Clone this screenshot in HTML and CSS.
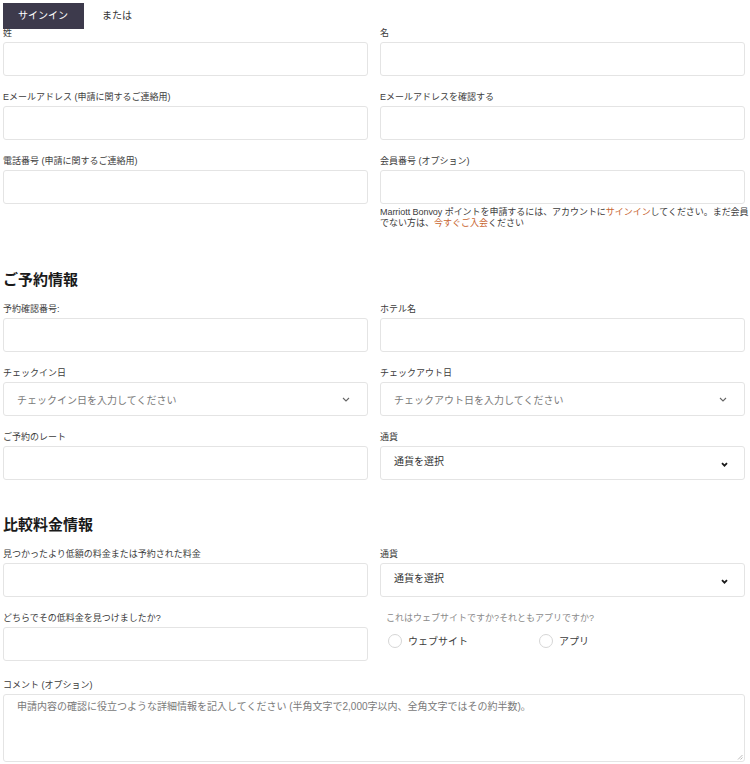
FILE: index.html
```html
<!DOCTYPE html>
<html lang="ja">
<head>
<meta charset="utf-8">
<link rel="stylesheet" href="styles.css">
</head>
<body>
<div class="page">
  <div class="tabs">
    <div class="tab active">サインイン</div>
    <div class="tab">または</div>
  </div>

  <div class="grid">
    <div class="field"><div class="label">姓</div><div class="input"></div></div>
    <div class="field"><div class="label">名</div><div class="input"></div></div>
    <div class="field"><div class="label">Eメールアドレス (申請に関するご連絡用)</div><div class="input"></div></div>
    <div class="field"><div class="label">Eメールアドレスを確認する</div><div class="input"></div></div>
    <div class="field"><div class="label">電話番号 (申請に関するご連絡用)</div><div class="input"></div></div>
    <div class="field"><div class="label">会員番号 (オプション)</div><div class="input"></div>
      <div class="help"><span class="line1">Marriott Bonvoy ポイントを申請するには、アカウントに<span class="link">サインイン</span>してください。まだ会員</span><br>でない方は、<span class="link">今すぐご入会</span>ください</div>
    </div>
  </div>

  <h2 class="heading first">ご予約情報</h2>
  <div class="grid">
    <div class="field"><div class="label">予約確認番号:</div><div class="input"></div></div>
    <div class="field"><div class="label">ホテル名</div><div class="input"></div></div>
    <div class="field"><div class="label">チェックイン日</div>
      <div class="input select"><span class="ph">チェックイン日を入力してください</span>
        <svg class="chev-thin" width="8" height="5" viewBox="0 0 8 5"><polyline points="1,1 4,4 7,1" fill="none" stroke="#666" stroke-width="1.1"/></svg>
      </div>
    </div>
    <div class="field"><div class="label">チェックアウト日</div>
      <div class="input select"><span class="ph">チェックアウト日を入力してください</span>
        <svg class="chev-thin" width="8" height="5" viewBox="0 0 8 5"><polyline points="1,1 4,4 7,1" fill="none" stroke="#666" stroke-width="1.1"/></svg>
      </div>
    </div>
    <div class="field"><div class="label">ご予約のレート</div><div class="input"></div></div>
    <div class="field"><div class="label">通貨</div>
      <div class="input select"><span class="val">通貨を選択</span>
        <svg class="chev-bold" width="7" height="5" viewBox="0 0 7 5"><polyline points="1,1.2 3.5,3.7 6,1.2" fill="none" stroke="#1a1a1a" stroke-width="1.8"/></svg>
      </div>
    </div>
  </div>

  <h2 class="heading second">比較料金情報</h2>
  <div class="grid">
    <div class="field"><div class="label">見つかったより低額の料金または予約された料金</div><div class="input"></div></div>
    <div class="field"><div class="label">通貨</div>
      <div class="input select"><span class="val">通貨を選択</span>
        <svg class="chev-bold" width="7" height="5" viewBox="0 0 7 5"><polyline points="1,1.2 3.5,3.7 6,1.2" fill="none" stroke="#1a1a1a" stroke-width="1.8"/></svg>
      </div>
    </div>
    <div class="field"><div class="label">どちらでその低料金を見つけましたか?</div><div class="input"></div></div>
    <div class="field">
      <div class="label q">これはウェブサイトですか?それともアプリですか?</div>
      <div class="radios">
        <div class="radio"><span class="circle"></span><span>ウェブサイト</span></div>
        <div class="radio"><span class="circle"></span><span>アプリ</span></div>
      </div>
    </div>
  </div>

  <div class="field comment">
    <div class="label">コメント (オプション)</div>
    <div class="input textarea"><span class="ph">申請内容の確認に役立つような詳細情報を記入してください (半角文字で2,000字以内、全角文字ではその約半数)。</span>
      <svg class="grip" width="6" height="6" viewBox="0 0 6 6"><line x1="1" y1="5.5" x2="5.5" y2="1" stroke="#aaa" stroke-width="0.8"/><line x1="3.5" y1="5.5" x2="5.5" y2="3.5" stroke="#aaa" stroke-width="0.8"/></svg>
    </div>
  </div>
</div>
</body>
</html>
```

FILE: styles.css
```css
* { box-sizing: border-box; }
html, body { margin: 0; padding: 0; background: #fff; }
body {
  font-family: "Liberation Sans", "Noto Sans CJK JP", sans-serif;
  color: #3c3c3c;
}
.page {
  padding: 3px 5px 0 3px;
  width: 750px;
}
.tabs {
  display: flex;
  align-items: center;
  height: 26px;
  margin-bottom: -2px;
}
.tab {
  font-size: 10px;
  line-height: 26px;
  color: #333;
  padding: 0 0 0 18px;
}
.tab.active {
  background: #3d3a4c;
  color: #fff;
  width: 81px;
  padding: 0 0 0 15px;
}
.grid {
  display: grid;
  grid-template-columns: 365px 365px;
  column-gap: 12px;
  row-gap: 15px;
}
.field { display: flex; flex-direction: column; }
.label {
  font-size: 9px;
  line-height: 12px;
  height: 12px;
  margin-bottom: 3px;
  color: #3c3c3c;
  white-space: nowrap;
}
.label.q { color: #8a8a8a; padding-left: 6px; margin-bottom: 9px; }
.input {
  height: 34px;
  border: 1px solid #e4e4e4;
  border-radius: 3px;
  background: #fff;
  position: relative;
}
.select {
  display: flex;
  align-items: center;
  justify-content: space-between;
  padding: 0 15px 0 13px;
  font-size: 10px;
}
.ph { font-size: 10px; color: #7a7a7a; }
.val { font-size: 10px; color: #333; margin-top: -5px; }
.chev-thin { margin-right: 2px; margin-top: 1px; }
.chev-bold { margin-top: 2px; margin-right: 1px; }
.help {
  font-size: 9px;
  line-height: 10.5px;
  margin-top: 3px;
  color: #3c3c3c;
}
.line1 { white-space: nowrap; letter-spacing: -0.05px; }
.link { color: #c8652f; }
.heading {
  font-size: 15px;
  line-height: 20px;
  font-weight: 700;
  color: #1a1a1a;
  margin: 0;
}
.heading.first { margin-top: 42px; margin-bottom: 13px; }
.heading.second { margin-top: 35px; margin-bottom: 13px; }
.radios { display: flex; padding-left: 8px; }
.radio {
  display: flex;
  align-items: center;
  width: 151px;
  font-size: 10px;
  color: #3c3c3c;
}
.circle {
  width: 14px;
  height: 14px;
  border: 1px solid #d6d6d6;
  border-radius: 50%;
  margin-right: 6px;
  background: #fff;
}
.comment { margin-top: 18px; width: 742px; }
.textarea {
  height: 68px;
  padding: 5px 13px;
  font-size: 10px;
  line-height: 14px;
}
.grip { position: absolute; right: 1px; bottom: 1px; }
```
